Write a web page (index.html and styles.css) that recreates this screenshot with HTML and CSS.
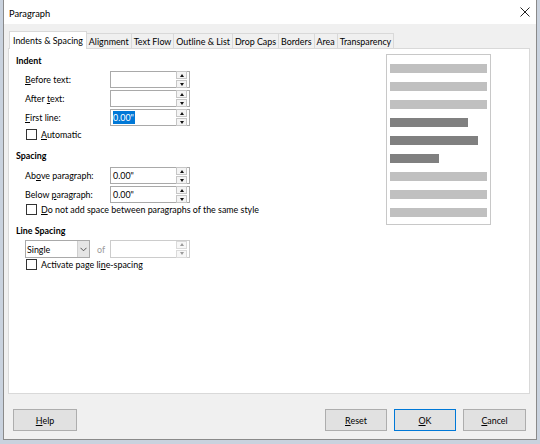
FILE: index.html
```html
<!DOCTYPE html>
<html>
<head>
<meta charset="utf-8">
<link rel="stylesheet" href="styles.css">
</head>
<body>
<div class="dialog">
  <div class="titlebar">
    <span class="title">Paragraph</span>
    <svg class="close" width="10" height="10" viewBox="0 0 10 10"><path d="M0.5 0.5 L9.5 9.5 M9.5 0.5 L0.5 9.5" stroke="#222" stroke-width="1" fill="none"/></svg>
  </div>
  <div class="content">
    <div class="tabs">
      <div class="tab active">Indents &amp; Spacing</div>
      <div class="tab">Alignment</div>
      <div class="tab">Text Flow</div>
      <div class="tab">Outline &amp; List</div>
      <div class="tab">Drop Caps</div>
      <div class="tab">Borders</div>
      <div class="tab">Area</div>
      <div class="tab">Transparency</div>
    </div>
    <div class="panel">
      <div class="form">
        <div class="heading h-indent">Indent</div>
        <div class="row r1">
          <span class="label"><u>B</u>efore text:</span>
          <div class="spin"><span class="val"></span><div class="btns"><div class="sb"><i class="up"></i></div><div class="sb"><i class="down"></i></div></div></div>
        </div>
        <div class="row r2">
          <span class="label">After <u>t</u>ext:</span>
          <div class="spin"><span class="val"></span><div class="btns"><div class="sb"><i class="up"></i></div><div class="sb"><i class="down"></i></div></div></div>
        </div>
        <div class="row r2">
          <span class="label"><u>F</u>irst line:</span>
          <div class="spin"><span class="val"><span class="sel">0.00"</span></span><div class="btns"><div class="sb"><i class="up"></i></div><div class="sb"><i class="down"></i></div></div></div>
        </div>
        <div class="check c1"><span class="box"></span><span><u>A</u>utomatic</span></div>

        <div class="heading h-spacing">Spacing</div>
        <div class="row r1s">
          <span class="label">Ab<u>o</u>ve paragraph:</span>
          <div class="spin"><span class="val">0.00"</span><div class="btns"><div class="sb"><i class="up"></i></div><div class="sb"><i class="down"></i></div></div></div>
        </div>
        <div class="row r2">
          <span class="label">Below <u>p</u>aragraph:</span>
          <div class="spin"><span class="val">0.00"</span><div class="btns"><div class="sb"><i class="up"></i></div><div class="sb"><i class="down"></i></div></div></div>
        </div>
        <div class="check c2"><span class="box"></span><span><u>D</u>o not add space between paragraphs of the same style</span></div>

        <div class="heading h-line">Line Spacing</div>
        <div class="row rsel">
          <div class="select"><span class="sval">Single</span><span class="drop"><svg width="7" height="5" viewBox="0 0 7 5"><path d="M0.5 0.8 L3.5 3.8 L6.5 0.8" stroke="#555" stroke-width="1" fill="none"/></svg></span></div>
          <span class="of">of</span>
          <div class="spin disabled"><span class="val"></span><div class="btns"><div class="sb"><i class="up"></i></div><div class="sb"><i class="down"></i></div></div></div>
        </div>
        <div class="check c3"><span class="box"></span><span>Activate page li<u>n</u>e-spacing</span></div>
      </div>
      <div class="preview">
        <div class="bar"></div>
        <div class="bar"></div>
        <div class="bar"></div>
        <div class="bar dark" style="width:78px"></div>
        <div class="bar dark" style="width:88px"></div>
        <div class="bar dark" style="width:49px"></div>
        <div class="bar"></div>
        <div class="bar"></div>
        <div class="bar"></div>
      </div>
    </div>
    <div class="buttons">
      <div class="btn help"><u>H</u>elp</div>
      <div class="spacer"></div>
      <div class="btn"><u>R</u>eset</div>
      <div class="btn ok"><u>O</u>K</div>
      <div class="btn cancel"><u>C</u>ancel</div>
    </div>
  </div>
</div>
</body>
</html>
```

FILE: styles.css
```css
html, body {
  margin: 0;
  padding: 0;
}
body {
  width: 540px;
  height: 444px;
  overflow: hidden;
  background: #c9d2de;
  font-family: "Lato", "Liberation Sans", sans-serif;
  font-size: 8.9px;
  color: #000;
}
.dialog {
  margin-left: 3px;
  width: 532px;
  height: 439px;
  border: 1px solid #8a8a8a;
  border-top: 0;
  display: flex;
  flex-direction: column;
  background: #f0f0f0;
}
.titlebar {
  height: 24px;
  background: #fff;
  display: flex;
  align-items: center;
  padding-left: 5px;
  padding-right: 6px;
}
.title {
  flex: 1;
  font-size: 9.3px;
  padding-top: 2px;
}
.close {
  margin-top: 0;
}
.content {
  flex: 1;
  padding: 7px 6px 0 4px;
  display: flex;
  flex-direction: column;
}
.tabs {
  display: flex;
  height: 17px;
  padding-left: 1px;
  align-items: flex-end;
}
.tab {
  height: 15px;
  line-height: 15px;
  padding: 0 2px;
  border: 1px solid #d9d9d9;
  border-bottom: 0;
  border-left: 0;
  background: #f0f0f0;
  box-sizing: border-box;
  white-space: nowrap;
}
.tab.active {
  height: 18px;
  line-height: 18px;
  background: #fff;
  border-left: 1px solid #d9d9d9;
  margin-bottom: -1px;
  position: relative;
  z-index: 1;
  padding: 0 3px;
}
.panel {
  height: 346px;
  box-sizing: border-box;
  background: #fff;
  border: 1px solid #d9d9d9;
  display: grid;
  grid-template-columns: 370px 105px;
  padding: 5px 0 0 7px;
}
.form {
  display: flex;
  flex-direction: column;
}
.heading {
  height: 14px;
  line-height: 14px;
  font-weight: bold;
}
.h-spacing, .h-line {
  margin-top: 8px;
}
.row {
  display: flex;
  align-items: center;
  height: 17px;
  padding-left: 9px;
}
.r1 { margin-top: 3px; }
.r2 { margin-top: 2px; }
.r1s { margin-top: 4px; }
.rsel { height: 18px; margin-top: 2px; }
.label {
  width: 85px;
}
u {
  text-decoration: underline;
  text-underline-offset: 1px;
}
.spin {
  width: 80px;
  height: 17px;
  box-sizing: border-box;
  border: 1px solid #a9a9a9;
  background: #fff;
  display: flex;
  align-items: center;
}
.rsel .spin { height: 18px; }
.val {
  flex: 1;
  padding-left: 2px;
  line-height: 13px;
}
.sel {
  background: #0078d7;
  color: #fff;
  display: inline-block;
  padding: 0 1px 0 0;
}
.btns {
  width: 11px;
  margin-right: 2px;
  display: flex;
  flex-direction: column;
  gap: 1px;
}
.sb {
  height: 6px;
  border: 1px solid #c6c6c6;
  background: #f4f4f4;
  display: flex;
  align-items: center;
  justify-content: center;
}
.sb i {
  width: 0;
  height: 0;
  border-left: 2.5px solid transparent;
  border-right: 2.5px solid transparent;
}
.sb i.up { border-bottom: 3px solid #111; }
.sb i.down { border-top: 3px solid #111; }
.disabled { border-color: #cccccc; }
.disabled .sb { border-color: #dadada; background: #f7f7f7; }
.disabled .sb i.up { border-bottom-color: #9a9a9a; }
.disabled .sb i.down { border-top-color: #9a9a9a; }
.check {
  display: flex;
  align-items: center;
  height: 13px;
  padding-left: 10px;
  gap: 4px;
}
.c1 { margin-top: 2px; }
.box {
  width: 9px;
  height: 9px;
  border: 1px solid #333;
  background: #fff;
  flex: none;
}
.select {
  width: 65px;
  height: 18px;
  box-sizing: border-box;
  border: 1px solid #a9a9a9;
  background: #fff;
  display: flex;
  align-items: center;
}
.sval {
  flex: 1;
  padding-left: 1px;
}
.drop {
  width: 11px;
  height: 16px;
  background: #e5e5e5;
  border-left: 1px solid #cfcfcf;
  display: flex;
  align-items: center;
  justify-content: center;
}
.of {
  color: #9a9a9a;
  width: 13px;
  margin-left: 7px;
}
.preview {
  width: 105px;
  height: 171px;
  box-sizing: border-box;
  border: 1px solid #c8c8c8;
  padding: 9px 0 0 3px;
  display: flex;
  flex-direction: column;
  gap: 9px;
}
.bar {
  width: 97px;
  height: 9px;
  background: #c0c0c0;
  flex: none;
}
.bar.dark {
  background: #808080;
}
.buttons {
  display: flex;
  margin-top: 15px;
  padding-left: 5px;
  padding-right: 4px;
  gap: 7px;
}
.spacer { flex: 1; }
.btn {
  width: 62px;
  height: 22px;
  box-sizing: border-box;
  border: 1px solid #adadad;
  background: #e1e1e1;
  display: flex;
  align-items: center;
  justify-content: center;
}
.btn.help { width: 64px; }
.btn.cancel { width: 63px; }
.btn.ok {
  border: 1px solid #0078d7;
}
```
